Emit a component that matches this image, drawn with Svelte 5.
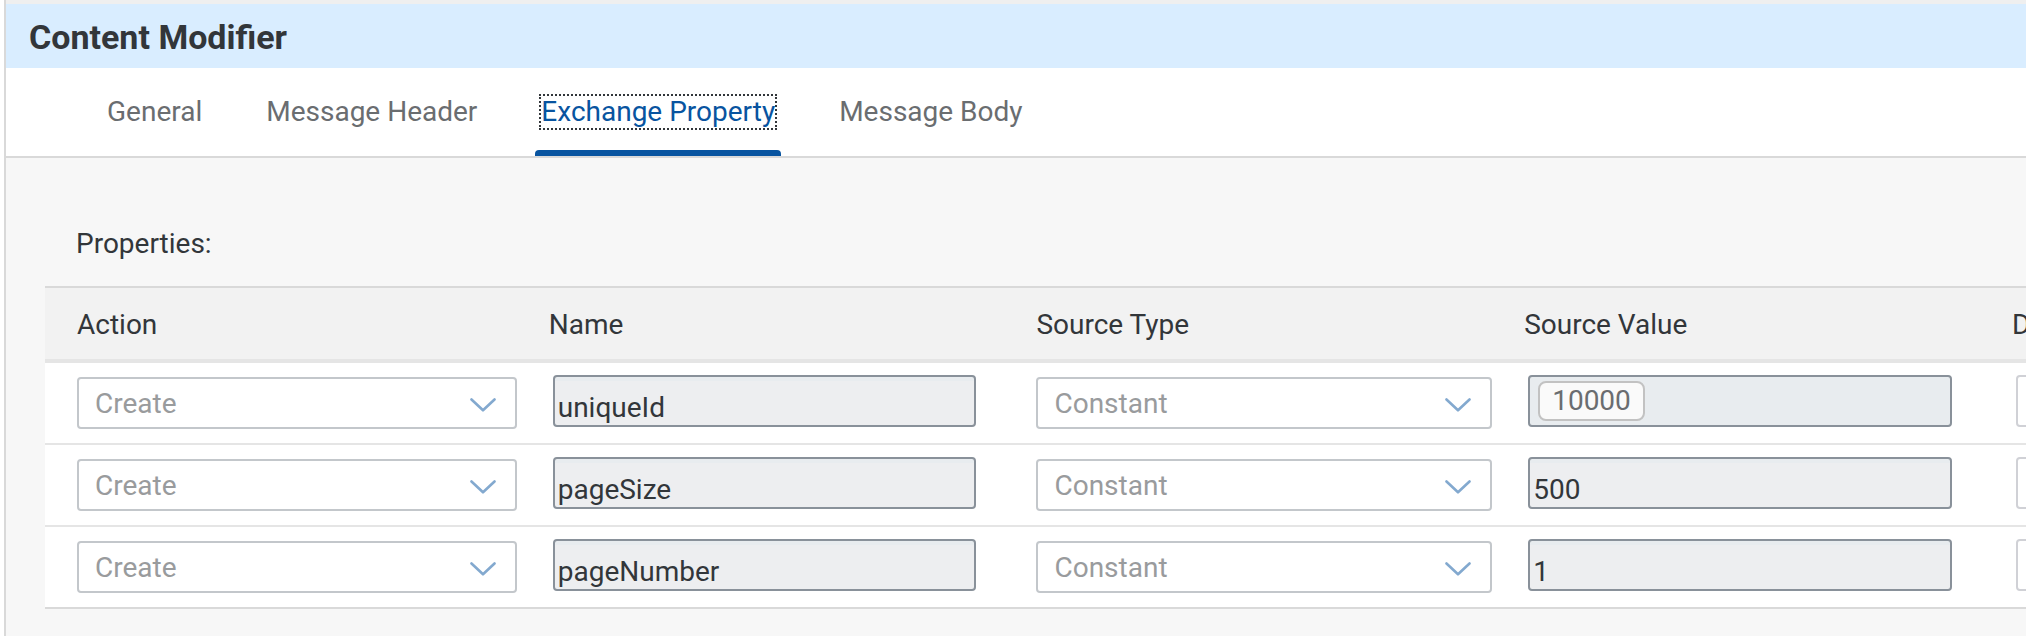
<script>
  const tabs = ['General', 'Message Header', 'Exchange Property', 'Message Body'];
  let active = $state('Exchange Property');

  const columns = ['Action', 'Name', 'Source Type', 'Source Value', 'Data Type'];
  const rows = [
    { action: 'Create', name: 'uniqueId', type: 'Constant', value: '10000', token: true },
    { action: 'Create', name: 'pageSize', type: 'Constant', value: '500' },
    { action: 'Create', name: 'pageNumber', type: 'Constant', value: '1' }
  ];
</script>

{#snippet dropdown(label, value)}
  <div class="dropdown">
    <select aria-label={label} disabled>
      <option>{value}</option>
    </select>
    <svg class="chevron" viewBox="0 0 26 14" aria-hidden="true">
      <path d="M1.5 1.5 L13 12.3 L24.5 1.5" />
    </svg>
  </div>
{/snippet}

<main class="panel">
  <header class="title-bar">
    <h1>Content Modifier</h1>
  </header>

  <div class="tabs" role="tablist">
    {#each tabs as tab}
      <button
        class="tab"
        class:active={tab === active}
        role="tab"
        aria-selected={tab === active}
        onclick={() => (active = tab)}
      >
        <span>{tab}</span>
      </button>
    {/each}
  </div>

  <section class="content">
    <h2 id="properties">Properties:</h2>
    <div class="table-wrap">
      <table aria-labelledby="properties">
        <thead>
          <tr>
            {#each columns as column}
              <th scope="col">{column}</th>
            {/each}
          </tr>
        </thead>
        <tbody>
          {#each rows as row}
            <tr>
              <td>{@render dropdown('Action', row.action)}</td>
              <td><input class="field" aria-label="Name" value={row.name} readonly /></td>
              <td>{@render dropdown('Source Type', row.type)}</td>
              <td>
                {#if row.token}
                  <div class="field tokens"><span class="token">{row.value}</span></div>
                {:else}
                  <input class="field" aria-label="Source Value" value={row.value} readonly />
                {/if}
              </td>
              <td><input class="field blank" aria-label="Data Type" disabled /></td>
            </tr>
          {/each}
        </tbody>
      </table>
    </div>
  </section>
</main>

<style>
  :global(body) {
    background: #f7f7f7;
  }

  .panel,
  .panel * {
    box-sizing: border-box;
  }

  .panel {
    min-height: 100vh;
    margin-left: 4px;
    border-left: 2px solid #d9d9d9;
    background: #f7f7f7;
    box-shadow: -4px 0 0 #fff;
    color: #32363a;
    font-family: Roboto, sans-serif;
    font-size: 28px;
    font-weight: 450;
    line-height: 36px;
    overflow: hidden;
  }

  .title-bar {
    display: flex;
    align-items: center;
    height: 68px;
    padding: 2px 23px 0;
    border-top: 4px solid #efefef;
    background: #d9edff;
  }

  h1 {
    margin: 0;
    font-size: 34px;
    font-weight: 700;
    line-height: 40px;
  }

  .tabs {
    display: flex;
    gap: 52px;
    height: 90px;
    padding: 0 95px;
    border-bottom: 2px solid #d9d9d9;
    background: #fff;
  }

  .tab {
    display: flex;
    align-items: center;
    padding: 0 4px;
    border: 0;
    background: none;
    color: #6a6d70;
    font: inherit;
    white-space: nowrap;
  }

  .tab span {
    border: 2px dotted transparent;
    line-height: 32px;
  }

  .tab.active {
    position: relative;
    color: #0854a0;
  }

  .tab.active::after {
    content: '';
    position: absolute;
    left: 0;
    right: 0;
    bottom: 0;
    height: 6px;
    border-radius: 4px 4px 0 0;
    background: #0854a0;
  }

  .tab.active span {
    border-color: #32363a;
  }

  .content {
    padding: 68px 0 0 39px;
  }

  h2 {
    margin: 0;
    padding: 0 31px 24px;
    font-size: 28px;
    font-weight: 450;
    line-height: 36px;
  }

  .table-wrap {
    overflow: hidden;
    border-top: 2px solid #d9d9d9;
    border-bottom: 2px solid #d9d9d9;
    background: #fff;
  }

  table {
    width: 123.1%;
    table-layout: fixed;
    border-collapse: separate;
    border-spacing: 0;
  }

  th {
    height: 75px;
    padding: 2px 16px 0;
    border-bottom: 4px solid #e5e5e5;
    background: #f2f2f2;
    font-weight: 450;
    text-align: left;
    white-space: nowrap;
  }

  td {
    height: 82px;
    padding: 12px 16px 14px;
    border-bottom: 2px solid #e5e5e5;
    vertical-align: top;
  }

  tr:last-child td {
    height: 80px;
    border-bottom: 0;
  }

  th:first-child,
  td:first-child {
    padding-left: 32px;
  }

  .dropdown {
    display: grid;
    align-items: center;
    margin-top: 2px;
  }

  .dropdown > * {
    grid-area: 1 / 1;
  }

  select {
    width: 100%;
    height: 52px;
    padding: 2px 16px 0;
    border: 2px solid #c3c7cb;
    border-radius: 4px;
    appearance: none;
    background: #fff;
    color: #999b9d;
    font: inherit;
    opacity: 1;
  }

  .chevron {
    width: 26px;
    height: 14px;
    margin: 3px 21px 0 0;
    justify-self: end;
    pointer-events: none;
  }

  .chevron path {
    fill: none;
    stroke: #83a9cf;
    stroke-width: 2.6;
    stroke-linecap: round;
    stroke-linejoin: round;
  }

  .field {
    display: block;
    width: calc(100% - 32px);
    height: 52px;
    margin-left: 4px;
    padding: 12px 3px 0;
    border: 2px solid #89919a;
    border-radius: 4px;
    background: linear-gradient(#e8ecef 4px, #edeef0 4px);
    color: #32363a;
    font: inherit;
  }

  .tokens {
    display: flex;
    align-items: flex-start;
    padding: 4px 8px;
    background: #e8ecef;
  }

  .token {
    padding: 0 12px;
    border: 2px solid #c2c2c2;
    border-radius: 8px;
    background: #fafafa;
    color: #6a6d70;
  }

  .blank {
    border-color: #d0d1d6;
    background: #fff;
  }
</style>
